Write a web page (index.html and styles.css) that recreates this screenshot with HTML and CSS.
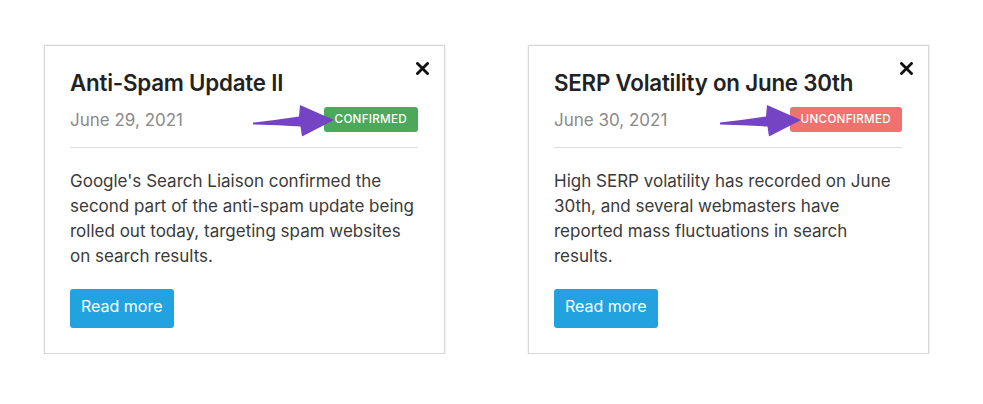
FILE: index.html
```html
<!DOCTYPE html>
<html lang="en">
<head>
    <meta charset="UTF-8">
    <meta name="viewport" content="width=device-width, initial-scale=1.0">
    <title>Search updates</title>
    <link rel="stylesheet" href="styles.css">
</head>
<body>

    <div id="cards">
        <div class="card">
            <span class="close-btn">
                <svg width="13" height="13" viewBox="0 0 13 13"><path d="M1.5 1.5 L11.5 11.5 M11.5 1.5 L1.5 11.5" stroke="#111" stroke-width="2.8" stroke-linecap="square"/></svg>
            </span>
            <h2 class="card-title">Anti-Spam Update II</h2>
            <div class="card-meta">
                <span class="card-date">June 29, 2021</span>
                <span class="badge badge-confirmed">Confirmed</span>
            </div>
            <p class="card-text">Google's Search Liaison confirmed the second part of the anti-spam update being rolled out today, targeting spam websites on search results.</p>
            <a class="read-more">Read more</a>
            <svg class="pointer pointer-1" width="82" height="33" viewBox="0 0 82 33"><path d="M0 18.5 Q24 16 46 12.5 L47 1 L81 16 L49 32.5 L47.5 22.5 Q24 21 0 20.5 Z" fill="#7544c4"/></svg>
        </div>

        <div class="card">
            <span class="close-btn">
                <svg width="13" height="13" viewBox="0 0 13 13"><path d="M1.5 1.5 L11.5 11.5 M11.5 1.5 L1.5 11.5" stroke="#111" stroke-width="2.8" stroke-linecap="square"/></svg>
            </span>
            <h2 class="card-title">SERP Volatility on June 30th</h2>
            <div class="card-meta">
                <span class="card-date">June 30, 2021</span>
                <span class="badge badge-unconfirmed">Unconfirmed</span>
            </div>
            <p class="card-text">High SERP volatility has recorded on June 30th, and several webmasters have reported mass fluctuations in search results.</p>
            <a class="read-more">Read more</a>
            <svg class="pointer pointer-2" width="82" height="33" viewBox="0 0 82 33"><path d="M0 18.5 Q24 16 46 12.5 L47 1 L81 16 L49 32.5 L47.5 22.5 Q24 21 0 20.5 Z" fill="#7544c4"/></svg>
        </div>
    </div>

</body>
</html>
```

FILE: styles.css
```css
body {
    background: white;
    margin: 0;
    font-family: 'Inter', 'Roboto', sans-serif;
    color: #333;
}

#cards {
    display: flex;
    gap: 83px;
    padding: 45px 0 0 44px;
}

.card {
    position: relative;
    width: 348px;
    height: 260px;
    padding: 24px 26px 23px 25px;
    border: 1px solid #d6d6d6;
    box-shadow: 0 0 2px rgba(0, 0, 0, 0.12);
    background: white;
}

.close-btn {
    position: absolute;
    top: 16px;
    right: 15px;
    line-height: 0;
    cursor: pointer;
}

.card-title {
    margin: 0;
    font-size: 22.3px;
    line-height: 26px;
    font-weight: 600;
    color: #222;
    letter-spacing: -0.2px;
}

.card-meta {
    display: flex;
    justify-content: space-between;
    align-items: center;
    margin-top: 11px;
    padding-bottom: 15px;
    border-bottom: 1px solid #ddd;
}

.card-date {
    font-size: 17px;
    color: #8a8a8a;
}

.badge {
    height: 25px;
    line-height: 25px;
    padding: 0 11px;
    border-radius: 3px;
    color: white;
    font-size: 11.7px;
    font-weight: 500;
    text-transform: uppercase;
    letter-spacing: 0.25px;
}

.badge-confirmed {
    background-color: #4ca85a;
}

.badge-unconfirmed {
    background-color: #f0726e;
}

.card-text {
    margin: 21px 0 20px;
    font-size: 17px;
    line-height: 25px;
    color: #3a3a3a;
}

.read-more {
    display: inline-block;
    height: 39px;
    line-height: 35px;
    padding: 0 11px;
    border-radius: 3px;
    background-color: #22a3e0;
    color: white;
    font-size: 16px;
    text-decoration: none;
    cursor: pointer;
}

.pointer {
    position: absolute;
    top: 58px;
}

.pointer-1 {
    left: 208px;
}

.pointer-2 {
    left: 191px;
}
```
